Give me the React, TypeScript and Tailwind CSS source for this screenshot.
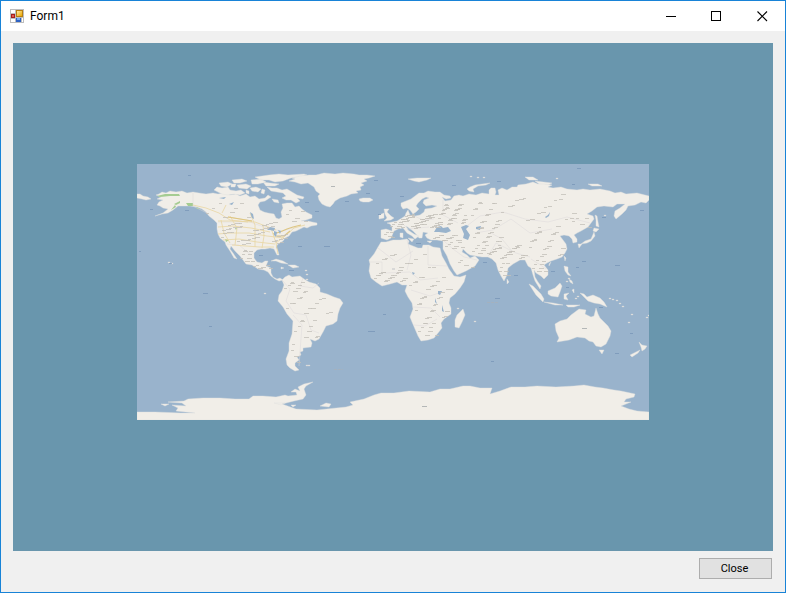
import React from "react";

const LAND = [
  // Chukotka tip and Alaska / North America
  "M137 194L140 194 143 196 148 197 151 199 146 200 142 199 137 198Z",
  "M156 195L159 194 162 192 166 193 170 191 176 192 182 191 187 193 193 192 199 193 206 194 213 193 218 194 224 193 230 195 236 194 240 196 246 194 250 197 255 196 259 199 265 198 268 195 271 197 268 199 265 201 260 202 258 205 260 210 264 212 268 213 274 214 276 218 279 219 282 217 281 212 283 208 282 204 287 203 292 203 295 207 299 206 302 209 306 212 312 215 312 218 306 220 301 221 308 221 312 222 317 223 317 225 311 226 307 228 304 227 300 229 296 231 292 232 289 236 285 238 283 241 278 244 276 247 278 251 279 255 277 255 274 249 270 248 265 249 261 249 257 250 254 253 254 258 257 262 262 263 265 261 268 261 266 266 271 268 271 273 273 277 277 279 280 278 283 280 279 281 275 279 271 276 268 272 264 270 258 269 252 265 246 264 243 260 240 256 235 251 231 246 230 249 233 253 237 259 234 258 230 251 226 245 225 242 220 238 218 234 217 229 217 223 214 220 209 216 206 212 202 209 197 207 190 206 184 206 178 206 173 210 168 213 162 214 155 216 163 213 168 209 163 208 160 206 157 205 159 202 163 200 157 199 161 197Z",
  // Arctic archipelago
  "M214 190L217 187 222 188 228 187 230 190 236 191 241 190 245 193 240 195 234 194 228 195 222 194 218 192Z",
  "M219 183L228 182 232 184 227 187 221 186Z M232 180L242 179 247 181 240 183 234 183Z M237 185L246 184 251 186 247 189 239 188Z M251 180L261 179 266 182 258 184 252 184Z M255 177L269 175 279 174 288 175 304 174 307 175 300 177 291 178 283 181 275 182 269 180 261 180Z M263 182L270 183 279 184 275 186 266 186Z M250 188L256 187 261 189 258 192 252 191Z",
  "M267 187L272 188 277 188 282 190 287 189 292 192 297 195 304 197 303 199 297 198 300 201 296 203 291 200 286 200 282 198 286 196 283 193 277 192 271 191Z M272 199L278 200 279 203 274 202Z M246 190L249 191 249 194 246 193Z M262 189L265 190 264 194 261 193Z M231 184L236 184 235 187 231 187Z",
  // Greenland, Iceland, Svalbard, Novaya Zemlya
  "M289 181L295 179 292 178 300 176 309 175 316 175 324 173 335 174 343 173 354 174 359 175 367 175 375 176 369 178 364 179 367 181 361 183 364 185 360 187 361 190 356 191 358 193 351 194 347 196 340 198 335 201 333 204 330 207 326 206 322 204 319 200 318 196 320 194 316 191 314 187 308 183 301 184 295 182Z",
  "M359 199L363 198 370 198 373 200 369 202 363 202 360 201Z M408 179L417 178 431 178 427 180 419 182 414 181Z M467 189L470 187 475 185 482 184 490 183 486 185 478 186 473 189 474 192 469 191Z M525 177L533 177 538 180 529 180Z M535 181L552 183 548 185 539 184Z M588 184L598 184 602 186 592 186Z",
  // Europe and Asia
  "M381 230L386 229 392 231 392 227 390 224 387 223 392 222 397 221 402 218 405 216 406 213 408 210 410 215 415 216 420 215 424 212 425 209 432 208 437 206 432 205 426 206 423 203 424 200 429 198 426 197 422 199 418 203 416 206 419 209 416 212 413 214 410 210 407 208 403 209 401 206 401 203 406 201 411 199 415 196 419 193 424 193 428 191 435 192 440 192 444 195 450 196 451 198 446 199 442 197 445 201 451 200 454 196 459 195 463 196 469 194 476 195 482 193 489 194 489 190 491 188 495 188 496 192 495 195 499 195 498 190 502 188 507 190 512 187 517 187 518 185 526 184 533 182 538 184 544 184 552 185 548 187 553 188 561 187 567 189 577 190 583 189 590 190 600 189 610 191 615 193 621 192 626 194 637 193 649 196 649 200 646 203 641 202 635 205 628 206 626 210 622 214 616 219 614 216 615 211 620 208 625 204 617 204 613 207 604 206 597 207 592 211 587 214 593 216 594 219 591 223 588 227 581 231 577 233 574 235 577 239 577 242 573 243 572 239 569 236 564 235 560 236 563 240 566 244 567 249 565 253 562 257 557 259 551 261 547 263 544 265 548 270 548 275 544 279 541 276 536 273 534 270 535 277 538 282 541 286 540 289 535 281 533 275 531 268 528 266 525 260 520 260 513 264 508 268 507 275 504 281 501 276 498 270 496 263 492 259 488 257 482 257 476 256 470 255 467 253 463 249 462 252 467 255 470 258 475 256 479 260 475 266 466 271 457 275 454 271 450 264 447 256 443 249 443 241 437 240 431 240 427 238 425 235 428 233 423 232 422 238 419 238 416 234 413 231 409 228 406 226 408 230 414 234 419 236 415 239 412 236 407 233 403 228 398 229 394 231 391 238 387 240 381 238Z",
  // Britain and Ireland
  "M384 209L389 209 387 212 391 216 394 218 391 220 384 221 387 218 385 214Z M379 215L384 213 384 218 379 219Z M400 233L403 233 403 238 400 237Z M408 238L414 239 412 242Z M427 241L432 241 430 243Z",
  // Africa and Madagascar
  "M381 242L386 242 393 240 400 240 407 239 409 241 408 244 413 246 418 248 422 248 423 245 429 245 433 247 440 248 442 256 446 263 449 269 454 276 460 277 466 275 464 282 460 288 455 294 450 298 449 303 451 308 451 314 444 319 441 323 442 328 438 333 434 338 428 340 421 341 418 336 415 329 412 322 410 317 413 309 412 303 408 297 405 291 407 285 402 285 397 282 390 284 382 286 376 282 371 278 369 271 370 264 369 260 374 254 378 247Z M463 309L465 315 462 322 459 328 455 327 455 320 457 315Z",
  // South America
  "M282 280L285 277 289 275 292 277 300 276 304 279 309 282 316 284 320 288 320 292 327 294 334 297 340 299 343 303 340 308 338 314 337 321 333 324 326 326 323 332 319 339 315 341 310 339 312 343 311 347 303 348 303 351 300 352 301 355 297 357 299 360 295 363 295 366 299 370 295 371 290 368 287 365 286 359 289 351 289 343 292 334 293 321 287 314 283 307 278 301 279 295 282 291 284 285Z",
  // Antilles
  "M271 261L276 259 283 261 288 264 281 263 276 261Z M288 265L295 265 299 267 293 268Z M281 267L284 268 281 269Z",
  // Maritime Asia
  "M595 215L597 216 598 222 599 227 596 226 596 220Z M594 228L599 229 596 232 593 231Z M594 232L595 236 591 241 587 243 581 244 585 241 591 239Z M578 244L582 244 579 248Z M564 256L566 258 565 261Z M549 264L551 262 549 266Z M564 266L568 267 568 272 571 276 568 275 565 271Z M569 279L572 281 573 284 570 282Z M507 279L509 282 507 284Z M529 284L533 286 541 294 544 299 543 302 536 295Z M544 302L553 303 563 305 555 305Z M548 291L555 288 560 283 562 286 560 292 558 297 551 296 548 294Z M564 294L569 293 566 296 568 300 564 299Z M572 290L574 289 574 293Z M566 305L580 305 574 307 568 307Z M580 293L584 294 587 297 593 295 600 298 604 302 607 307 600 304 594 303 588 301 584 297Z",
  // Australia, Tasmania, New Zealand
  "M555 324L560 321 567 319 571 315 575 312 579 309 586 310 585 314 591 317 594 316 596 308 598 314 600 318 604 322 608 326 611 331 610 336 606 344 601 347 596 346 593 342 589 341 585 338 577 337 569 340 557 342 559 338 556 331Z M599 350L604 350 602 354Z M639 342L642 345 647 346 645 349 642 351 641 347Z M640 350L638 353 632 357 630 355Z",
  // Antarctica
  "M137 412L155 412 181 413 195 413 176 411 178 408 172 405 186 406 182 403 168 402 184 401 188 399 203 398 220 398 235 399 249 399 253 396 263 396 276 397 285 395 288 396 297 395 296 392 291 392 295 389 300 391 298 387 304 384 313 382 306 386 304 389 306 395 303 399 294 401 282 404 296 409 317 410 346 407 353 405 350 402 364 399 374 395 381 393 394 393 409 391 430 392 440 389 450 389 463 386 470 386 480 388 492 388 490 394 500 391 511 387 525 387 537 386 556 387 574 386 584 385 595 387 603 388 614 390 621 391 635 394 634 397 626 399 624 402 631 402 621 406 629 409 637 411 649 412 649 420 137 420Z M161 404L169 404 165 406Z M320 406L326 403 331 404 329 407Z M274 403L285 403 281 405Z M291 405L296 405 293 407Z",
];

const WATER = [
  "M434 232L437 227 441 226 443 228 448 227 451 231 446 233 439 232Z",
  "M461 227L466 225 469 226 466 229 470 235 468 240 463 238 464 234Z",
  "M476 227L481 226 480 230 476 229Z",
  "M545 217L548 215 550 212 549 216 546 218Z",
  "M438 291L442 291 440 295 438 294Z M442 305L444 312 442 311Z M435 298L437 304 435 302Z M412 272L415 273 413 275Z",
  "M267 230L270 227 275 228 274 231 270 230Z M274 231L277 232 276 237 274 235Z M278 230L281 231 280 234Z M219 198L226 197 224 199Z M229 204L234 202 232 205Z M250 212L253 214 254 219 252 218Z",
];

const BORDERS =
  "M193 193V206L207 213M218 222H250L267 228 282 231 296 227M227 244L239 245 251 255M282 280L290 289 286 301 294 313 306 315 311 330 319 333M303 278L300 286 313 288 319 283M293 315L302 325 299 366M378 248L396 262 413 251M407 240L411 255 407 270M428 246V265L447 266M370 262H382V275M385 273L410 272 420 280 438 278M411 290L430 296 442 292M413 307L431 308 440 317M414 325L425 326 437 319M400 221L408 229 429 227M412 215L423 220 434 219M443 200L443 215 458 223M468 225L480 216 503 212 525 219 548 222 567 217 590 223M475 233L493 230 511 219 530 233 552 229M488 256L496 243 516 253 530 257M491 233L502 239 512 251M444 241L453 249 464 257 477 260M531 259L539 264 546 269";

const ROADS =
  "M193 205L206 208 219 213 230 220 248 222M218 221L231 221 255 222 276 230M218 227L233 226 251 228 270 232M218 234L230 233 249 233 267 236 284 238M223 240L239 239 257 242 275 244M232 245L246 246 260 247 274 247M221 220L224 233 230 243M230 216L237 228 235 245M250 213L255 225 255 247M263 225L264 236 262 248M271 228L276 243 278 254M276 243L285 236 294 228 305 225M222 213L226 205M228 217L252 221";

const FOREST =
  "M157 196L165 194 179 194 180 196 170 196 160 197Z M174 204L180 201 180 203 176 205Z M186 203L193 203 193 206 188 206Z M171 210L175 205 176 207Z M196 207L200 209 197 209Z M225 239L229 240 226 242Z M235 228L237 228 236 230Z";

// Bands of place names: left, right, top, bottom, how many.
const LABEL_BANDS: [number, number, number, number, number][] = [
  [400, 440, 214, 228, 48], [438, 464, 204, 224, 30], [390, 402, 221, 228, 8],
  [383, 392, 231, 238, 5], [432, 460, 234, 240, 14], [445, 462, 241, 248, 7],
  [470, 500, 198, 222, 14], [500, 575, 194, 220, 18], [472, 500, 224, 242, 18],
  [472, 488, 243, 254, 8], [488, 524, 245, 258, 26], [499, 508, 260, 276, 7],
  [528, 562, 226, 256, 22], [532, 545, 258, 272, 8], [569, 590, 216, 228, 5],
  [375, 436, 251, 268, 12], [373, 404, 270, 281, 18], [408, 452, 274, 290, 12],
  [414, 446, 292, 318, 18], [418, 436, 320, 336, 9], [455, 472, 258, 268, 4],
  [284, 306, 280, 292, 10], [285, 332, 294, 314, 13], [294, 318, 316, 338, 10],
  [290, 298, 340, 364, 4], [220, 285, 222, 244, 46], [240, 252, 248, 262, 9],
  [250, 270, 264, 268, 6], [205, 250, 200, 218, 8], [282, 306, 208, 222, 6],
];

// Spreads each band's names evenly but irregularly, the same way on each load.
const LABELS = LABEL_BANDS.map(([x1, x2, y1, y2, count]) =>
  Array.from({ length: count }, (_, i) => {
    const x = Math.round(x1 + (x2 - x1) * ((i * 0.618 + 0.31) % 1));
    const y = Math.round(y1 + (y2 - y1) * ((i * 0.7549 + 0.17) % 1));
    return `M${x} ${y + 0.5}h${3 + (i % 3)}`;
  }).join(""),
);

const SEA_NAMES: [number, number, number][] = [
  [188, 175, 3], [150, 209, 3], [185, 210, 4], [139, 251, 2], [169, 263, 3],
  [203, 293, 5], [209, 326, 3], [324, 246, 6], [298, 246, 4], [305, 202, 4],
  [315, 211, 4], [345, 201, 4], [374, 180, 4], [366, 193, 4], [400, 196, 4],
  [378, 214, 3], [259, 255, 4], [289, 270, 5], [416, 243, 5], [452, 185, 4],
  [497, 181, 4], [577, 168, 4], [572, 184, 3], [602, 217, 4], [640, 210, 4],
  [582, 261, 4], [615, 265, 5], [551, 271, 4], [514, 275, 4], [495, 298, 5],
  [368, 331, 7], [383, 314, 3], [483, 262, 4], [630, 333, 3], [615, 353, 4],
  [491, 361, 3], [599, 307, 4], [566, 287, 3], [576, 267, 3],
];

const ISLETS: [number, number][] = [
  [171, 263], [168, 262], [264, 293], [305, 270], [306, 274], [306, 279],
  [306, 365], [308, 365], [616, 300], [619, 303], [622, 306], [628, 322],
  [631, 314], [646, 317], [648, 315], [474, 321], [457, 308], [604, 215],
  [612, 299], [609, 298], [556, 178], [477, 177], [470, 176], [483, 177],
  [568, 278], [566, 281], [577, 296], [575, 298],
];

function WorldMap() {
  return (
    <svg
      className="block w-[512px] max-w-full bg-[#99b3cc]"
      viewBox="137 164 512 256"
      role="img"
      aria-label="World map"
    >
      <g fill="#f1eee8" stroke="#e0e0de" strokeWidth="0.4">
        {LAND.map((d) => (
          <path key={d} d={d} />
        ))}
        {ISLETS.map(([x, y]) => (
          <path key={`${x}-${y}`} d={`M${x} ${y}h2v1h-2z`} stroke="#c5cbd0" />
        ))}
      </g>
      <path d={FOREST} fill="#a5cc92" />
      <path d={BORDERS} fill="none" stroke="#dcd9da" strokeWidth="0.5" />
      <path d={ROADS} fill="none" stroke="#e8d6a2" strokeWidth="0.8" />
      <path
        d="M273 234L280 232 287 229 293 227 301 225M228 217L240 219 252 221M276 236L284 236 290 231"
        fill="none"
        stroke="#ddc583"
        strokeWidth="1.2"
      />
      <g fill="#99b3cc">
        {WATER.map((d) => (
          <path key={d} d={d} />
        ))}
      </g>
      <g stroke="#c4c0b9" strokeWidth="0.8">
        {LABELS.map((d) => (
          <path key={d} d={d} />
        ))}
      </g>
      <g stroke="#7895b8" strokeWidth="0.8">
        {SEA_NAMES.map(([x, y, w]) => (
          <path key={`${x}-${y}`} d={`M${x} ${y + 0.5}h${w}`} />
        ))}
      </g>
      <path d="M422 406.500h5M582 328.500h5M331 186.500h4" stroke="#a4a8aa" strokeWidth="0.8" />
      <path d="M334 369.500h9M487 302.500h12M392 269h4" stroke="#a9b0b8" strokeWidth="0.7" strokeDasharray="3 1" />
    </svg>
  );
}

function FormIcon() {
  return (
    <svg className="h-[14px] w-[14px]" viewBox="0 0 14 14" shapeRendering="crispEdges" aria-hidden="true">
      <defs>
        <linearGradient id="gold" x1="0" y1="0" x2="1" y2="1">
          <stop offset="0" stopColor="#ffeaa0" />
          <stop offset="1" stopColor="#e9a600" />
        </linearGradient>
      </defs>
      <path d="M0 0H14V14H0Z" fill="#bdbdbd" />
      <path d="M1 1H5V4H1ZM1 10H5V13H1ZM12 9H13V13H12Z" fill="#fff" />
      <path d="M6 1H13V8H6Z" fill="#b77f12" />
      <path d="M7 2H12V7H7Z" fill="url(#gold)" />
      <path d="M1 5H5V9H1Z" fill="#a51e1e" />
      <path d="M2 6H4V8H2Z" fill="#e05a4e" />
      <path d="M6 9H11V13H6Z" fill="#2d62c4" />
      <path d="M7 9H10V11H7Z" fill="#79adf0" />
    </svg>
  );
}

const captionButton = "flex w-[46px] items-center justify-center hover:bg-gray-200";

export default function App() {
  return (
    <div className="flex min-h-screen flex-col border border-[#1883d7] bg-[#f0f0f0] font-['Roboto','Liberation_Sans',sans-serif] text-xs text-black">
      <header className="flex h-[30px] items-stretch bg-white">
        <div className="flex flex-1 items-center gap-1.5 pl-[9px]">
          <FormIcon />
          <h1>Form1</h1>
        </div>
        <button type="button" aria-label="Minimize" className={captionButton}>
          <svg className="h-[11px] w-[11px]" viewBox="0 0 11 11" shapeRendering="crispEdges">
            <path d="M1 5H11V6H1Z" />
          </svg>
        </button>
        <button type="button" aria-label="Maximize" className={captionButton}>
          <svg className="h-[11px] w-[11px]" viewBox="0 0 11 11" shapeRendering="crispEdges">
            <path d="M0.500 0.500H9.500V9.500H0.500Z" fill="none" stroke="#000" />
          </svg>
        </button>
        <button type="button" aria-label="Close window" className={captionButton}>
          <svg className="h-[11px] w-[11px]" viewBox="0 0 11 11">
            <path d="M0.500 0.500L10 10M10 0.500L0.500 10" fill="none" stroke="#000" strokeWidth="1.1" />
          </svg>
        </button>
      </header>
      <main className="flex flex-1 flex-col gap-[7px] px-3 pt-3 pb-[13px]">
        <section className="flex flex-1 items-center justify-center bg-[#6996ad] pb-2.5">
          <WorldMap />
        </section>
        <button
          type="button"
          className="mr-px flex h-[21px] w-[73px] items-center justify-center self-end border border-[#adadad] bg-[#e1e1e1] pt-0.5 pr-0.5 text-[11px] hover:bg-[#e5f1fb]"
        >
          Close
        </button>
      </main>
    </div>
  );
}
